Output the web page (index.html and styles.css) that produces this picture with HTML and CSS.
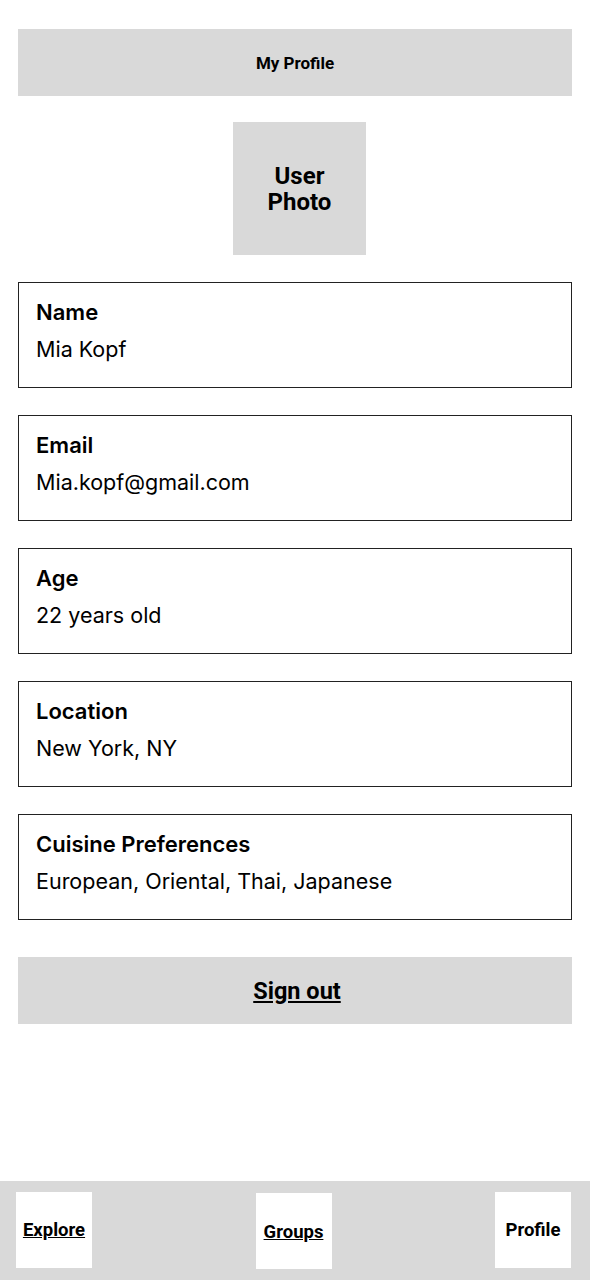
FILE: index.html
```html
<!DOCTYPE html>
<html>
<head>
	<title>My Profile</title>
	<meta charset="utf-8">
	<link rel="stylesheet" href="styles.css">
</head>
<body>
	<div class="page">
		<header class="topbar">My Profile</header>

		<div class="photo">User<br>Photo</div>

		<div class="field">
			<div class="label">Name</div>
			<div class="value">Mia Kopf</div>
		</div>
		<div class="field">
			<div class="label">Email</div>
			<div class="value">Mia.kopf@gmail.com</div>
		</div>
		<div class="field">
			<div class="label">Age</div>
			<div class="value">22 years old</div>
		</div>
		<div class="field">
			<div class="label">Location</div>
			<div class="value">New York, NY</div>
		</div>
		<div class="field">
			<div class="label">Cuisine Preferences</div>
			<div class="value">European, Oriental, Thai, Japanese</div>
		</div>

		<div class="signout"><a href="#">Sign out</a></div>
	</div>

	<nav class="tabbar">
		<a href="#" class="tab">Explore</a>
		<a href="#" class="tab tab-low">Groups</a>
		<span class="tab">Profile</span>
	</nav>
</body>
</html>
```

FILE: styles.css
```css
html, body {
	margin: 0;
	padding: 0;
}
body {
	background-color: #fff;
	min-height: 1280px;
	display: flex;
	flex-direction: column;
	font-family: Roboto, "Liberation Sans", sans-serif;
	color: #000;
}
.page {
	padding: 29px 18px 0;
}
.topbar {
	height: 67px;
	background-color: #d9d9d9;
	display: flex;
	align-items: center;
	justify-content: center;
	font-size: 17px;
	font-weight: 700;
}
.photo {
	width: 133px;
	height: 133px;
	margin: 26px 0 27px 215px;
	background-color: #d9d9d9;
	display: flex;
	align-items: center;
	justify-content: center;
	text-align: center;
	font-size: 24px;
	line-height: 26px;
	font-weight: 700;
}
.field {
	box-sizing: border-box;
	height: 106px;
	border: 1px solid #222;
	padding: 17px 17px 0;
	margin-bottom: 27px;
	font-family: Inter, "Noto Sans", sans-serif;
	line-height: 24px;
}
.label {
	font-size: 22px;
	font-weight: 600;
}
.value {
	margin-top: 13px;
	font-size: 21.5px;
	font-weight: 400;
}
.signout {
	margin-top: 37px;
	height: 67px;
	background-color: #d9d9d9;
	display: flex;
	align-items: center;
	justify-content: center;
}
.signout a {
	color: #000;
	font-size: 23.5px;
	font-weight: 700;
	margin-left: 4px;
}
.tabbar {
	margin-top: auto;
	height: 99px;
	box-sizing: border-box;
	background-color: #d9d9d9;
	padding: 11px 19px 0 16px;
	display: flex;
	justify-content: space-between;
	align-items: flex-start;
}
.tab {
	width: 76px;
	height: 76px;
	background-color: #fff;
	display: flex;
	align-items: center;
	justify-content: center;
	color: #000;
	font-size: 18.5px;
	font-weight: 700;
}
.tab-low {
	margin-top: 1px;
	padding-top: 2px;
	box-sizing: border-box;
}
```
